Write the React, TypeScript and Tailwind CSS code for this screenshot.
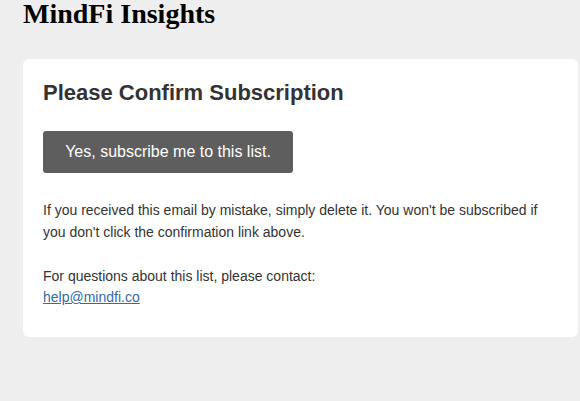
export default function App() {
  return (
    <div className="min-h-[401px] w-[580px] overflow-hidden bg-[#eeeeee]">
      <h1
        className="ml-[23px] text-[28px] leading-[28px] font-bold text-black"
        style={{ fontFamily: '"Liberation Serif", "Times New Roman", serif' }}
      >
        MindFi Insights
      </h1>
      <div
        className="mt-[31px] ml-[23px] w-[555px] rounded-[6px] bg-white px-[20px] pt-[21px] pb-[29px] text-[#333333]"
        style={{ fontFamily: '"Liberation Sans", Arial, sans-serif' }}
      >
        <h2 className="text-[22px] leading-[26px] font-bold text-[#333333]">Please Confirm Subscription</h2>
        <div className="mt-[25px]">
          <a className="inline-flex h-[42px] w-[250px] items-center justify-center rounded-[3px] bg-[#5e5e5e] text-[16px] text-white">
            Yes, subscribe me to this list.
          </a>
        </div>
        <p className="mt-[26px] text-[14px] leading-[22px]">
          If you received this email by mistake, simply delete it. You won't be subscribed if you don't click the confirmation link above.
        </p>
        <p className="mt-[23px] text-[14px] leading-[21px]">
          For questions about this list, please contact:
          <br />
          <a className="text-[#3569ad] underline">help@mindfi.co</a>
        </p>
      </div>
    </div>
  );
}
